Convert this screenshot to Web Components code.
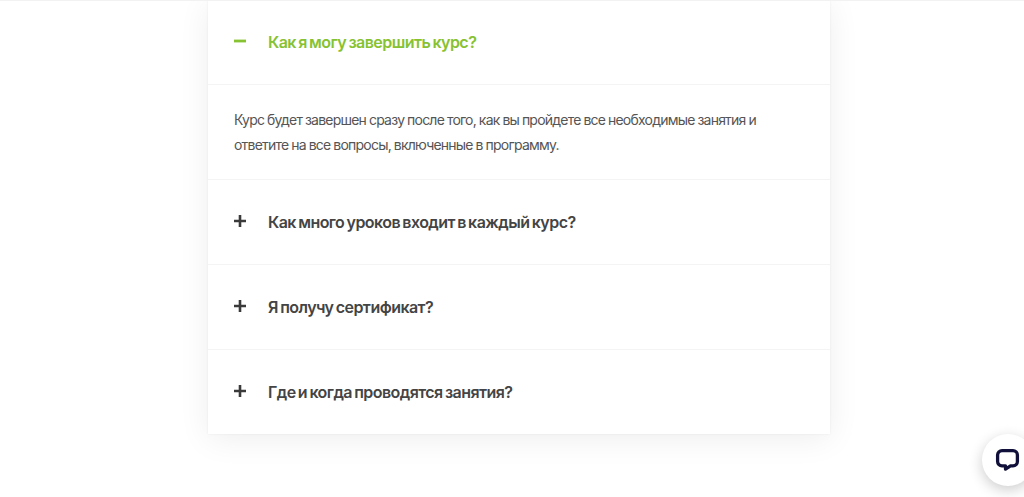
<!DOCTYPE html>
<html lang="ru">
<head>
<meta charset="utf-8">
<style>
html,body{margin:0;padding:0;background:#fff;height:497px;overflow:hidden}
body{font-family:Inter,"Noto Sans",sans-serif;position:relative}
</style>
</head>
<body>
<faq-page>
  <faq-item open title-text="Как я могу завершить курс?">Курс будет завершен сразу после того, как вы пройдете все необходимые занятия и ответите на все вопросы, включенные в программу.</faq-item>
  <faq-item title-text="Как много уроков входит в каждый курс?"></faq-item>
  <faq-item title-text="Я получу сертификат?"></faq-item>
  <faq-item last title-text="Где и когда проводятся занятия?"></faq-item>
</faq-page>
<chat-button></chat-button>
<script>
class FaqPage extends HTMLElement{
  constructor(){super();this.attachShadow({mode:'open'}).innerHTML=`
  <style>
  :host{display:block;height:497px}
  .line{height:1px;background:#f2f2f2;margin-bottom:-1px;position:relative;z-index:1}
  .card{width:622px;margin-left:208px;background:#fff;box-shadow:0 5px 30px rgba(0,0,0,.07),0 0 2px rgba(0,0,0,.07);display:flex;flex-direction:column}
  </style><div class="line"></div><div class="card"><slot></slot></div>`;}
}
class FaqItem extends HTMLElement{
  constructor(){super();
    const open=this.hasAttribute('open'), t=this.getAttribute('title-text');
    const icon=open?'<svg width="12" height="12" viewBox="0 0 12 12"><rect x="0" y="4.600" width="12" height="2.800" fill="#86c232"/></svg>'
      :'<svg width="12" height="12" viewBox="0 0 12 12"><path d="M0 4.700h12v2.600H0zM4.700 0h2.600v12H4.700z" fill="#3a3a3a"/></svg>';
    this.attachShadow({mode:'open'}).innerHTML=`
    <style>
    :host{display:block;border-bottom:1px solid #f4f4f4}
    :host([last]){border-bottom:none}
    .head{height:84px;display:flex;align-items:center;padding-left:26px;gap:22px;color:#444;font-size:16px;font-weight:600;letter-spacing:-.55px;word-spacing:-1.2px}
    .head svg{flex:none;margin-top:-2px}
    :host([open]) .head{color:#86c232;border-bottom:1px solid #f4f4f4}
    .body{padding:22px 26px 0;height:72px;font-size:14px;line-height:25px;color:#555;font-weight:400;letter-spacing:-.78px;word-spacing:-.3px}
    .body p{margin:0;width:545px}
    </style>
    <div class="head">${icon}<span>${t}</span></div>
    ${open?'<div class="body"><p><slot></slot></p></div>':''}`;}
}
class ChatButton extends HTMLElement{
  constructor(){super();this.attachShadow({mode:'open'}).innerHTML=`
  <style>
  :host{display:flex;position:absolute;left:982px;top:434px;width:52px;height:52px;border-radius:50%;background:#fff;box-shadow:0 4px 14px rgba(0,0,0,.2);align-items:center;justify-content:center}
  svg{display:block}
  </style>
  <svg width="26" height="26" viewBox="0 0 26 26"><path fill="none" stroke="#10103a" stroke-width="3.300" stroke-linejoin="round" d="M7 3.650h11a4.400 4.400 0 0 1 4.400 4.400v6.400a4.400 4.400 0 0 1-4.400 4.400h-2.500l-5 3.200v-3.200H7a4.400 4.400 0 0 1-4.400-4.400v-6.400A4.400 4.400 0 0 1 7 3.650z"/></svg>`;}
}
customElements.define('faq-page',FaqPage);
customElements.define('faq-item',FaqItem);
customElements.define('chat-button',ChatButton);
</script>
</body>
</html>
